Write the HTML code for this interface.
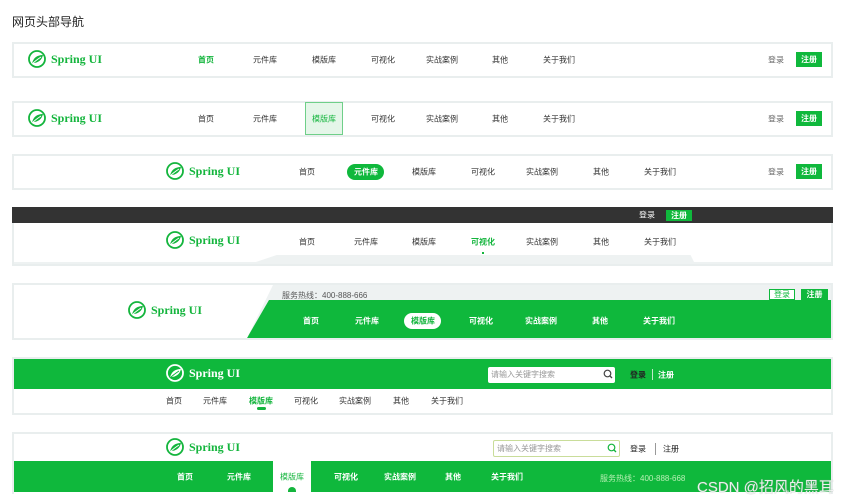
<!DOCTYPE html>
<html><head><meta charset="utf-8"><style>
*{margin:0;padding:0;box-sizing:border-box}
body{width:843px;height:500px;background:#fff;position:relative;overflow:hidden;font-family:"Liberation Sans","Noto Sans CJK SC",sans-serif;font-size:8px;color:#333}
.a{position:absolute}
.box{position:absolute;left:12px;width:821px;border:2px solid #e9eeee;background:#fff}
.t{position:absolute;transform:translate(-50%,-50%);white-space:nowrap;font-size:8px}
.logo{position:absolute;display:flex;align-items:center;transform:translateY(-50%)}
.logo span{font-family:"Liberation Serif","DejaVu Serif",serif;font-weight:bold;font-size:12px;color:#14b53d;margin-left:5px}
.logo.w span{color:#fff}
.g{color:#14b53d}
.btn{position:absolute;background:#0fb83c;color:#fff;font-size:8px;display:flex;align-items:center;justify-content:center;font-weight:bold}
.wt{color:#fff;font-weight:bold}
</style></head><body>
<div class="a" style="left:12px;top:13px;font-size:12px;color:#222">网页头部导航</div>

<!-- Box1 -->
<div class="box" style="top:42px;height:36px"></div>
<div class="logo" style="left:28px;top:59px"><svg width="18" height="18" viewBox="0 0 18 18"><circle cx="9" cy="9" r="8" fill="none" stroke="#14b53d" stroke-width="1.8"/><path d="M4 14 C5 8 9 5 15 5 C14 10 10 13 5 13Z" fill="#14b53d"/><path d="M4 14 C7 11 10 9 13 7" stroke="#fff" stroke-width="1" fill="none"/></svg><span>Spring UI</span></div>
<div class="t g" style="left:206px;top:60px;font-weight:bold">首页</div>
<div class="t" style="left:265px;top:60px">元件库</div>
<div class="t" style="left:324px;top:60px">模版库</div>
<div class="t" style="left:383px;top:60px">可视化</div>
<div class="t" style="left:442px;top:60px">实战案例</div>
<div class="t" style="left:500px;top:60px">其他</div>
<div class="t" style="left:559px;top:60px">关于我们</div>
<div class="t" style="left:776px;top:60px;color:#666">登录</div>
<div class="btn" style="left:796px;top:52px;width:26px;height:15px">注册</div>

<!-- Box2 -->
<div class="box" style="top:101px;height:36px"></div>
<div class="logo" style="left:28px;top:118px"><svg width="18" height="18" viewBox="0 0 18 18"><circle cx="9" cy="9" r="8" fill="none" stroke="#14b53d" stroke-width="1.8"/><path d="M4 14 C5 8 9 5 15 5 C14 10 10 13 5 13Z" fill="#14b53d"/><path d="M4 14 C7 11 10 9 13 7" stroke="#fff" stroke-width="1" fill="none"/></svg><span>Spring UI</span></div>
<div class="a" style="left:305px;top:102px;width:38px;height:33px;background:#e5f6e9;border:1px solid #6fcf89"></div>
<div class="t" style="left:206px;top:119px">首页</div>
<div class="t" style="left:265px;top:119px">元件库</div>
<div class="t g" style="left:324px;top:119px">模版库</div>
<div class="t" style="left:383px;top:119px">可视化</div>
<div class="t" style="left:442px;top:119px">实战案例</div>
<div class="t" style="left:500px;top:119px">其他</div>
<div class="t" style="left:559px;top:119px">关于我们</div>
<div class="t" style="left:776px;top:119px;color:#666">登录</div>
<div class="btn" style="left:796px;top:111px;width:26px;height:15px">注册</div>

<!-- Box3 -->
<div class="box" style="top:154px;height:36px"></div>
<div class="logo" style="left:166px;top:171px"><svg width="18" height="18" viewBox="0 0 18 18"><circle cx="9" cy="9" r="8" fill="none" stroke="#14b53d" stroke-width="1.8"/><path d="M4 14 C5 8 9 5 15 5 C14 10 10 13 5 13Z" fill="#14b53d"/><path d="M4 14 C7 11 10 9 13 7" stroke="#fff" stroke-width="1" fill="none"/></svg><span>Spring UI</span></div>
<div class="a" style="left:347px;top:164px;width:37px;height:16px;border-radius:8px;background:#0fb83c"></div>
<div class="t" style="left:307px;top:172px">首页</div>
<div class="t wt" style="left:366px;top:172px">元件库</div>
<div class="t" style="left:424px;top:172px">模版库</div>
<div class="t" style="left:483px;top:172px">可视化</div>
<div class="t" style="left:542px;top:172px">实战案例</div>
<div class="t" style="left:601px;top:172px">其他</div>
<div class="t" style="left:660px;top:172px">关于我们</div>
<div class="t" style="left:776px;top:172px;color:#666">登录</div>
<div class="btn" style="left:796px;top:164px;width:26px;height:15px">注册</div>

<!-- Box4 -->
<div class="a" style="left:12px;top:207px;width:821px;height:16px;background:#333"></div>
<div class="t" style="left:647px;top:215px;color:#fff">登录</div>
<div class="btn" style="left:666px;top:210px;width:26px;height:11px">注册</div>
<div class="box" style="top:223px;height:43px;border-top:none"></div>
<div class="a" style="left:14px;top:262px;width:817px;height:2px;background:#eef2f2"></div>
<div class="a" style="left:250px;top:255px;width:445px;height:9px;background:#eef2f2;clip-path:polygon(6% 0,99% 0,100% 100%,0 100%)"></div>
<div class="logo" style="left:166px;top:240px"><svg width="18" height="18" viewBox="0 0 18 18"><circle cx="9" cy="9" r="8" fill="none" stroke="#14b53d" stroke-width="1.8"/><path d="M4 14 C5 8 9 5 15 5 C14 10 10 13 5 13Z" fill="#14b53d"/><path d="M4 14 C7 11 10 9 13 7" stroke="#fff" stroke-width="1" fill="none"/></svg><span>Spring UI</span></div>
<div class="t" style="left:307px;top:242px">首页</div>
<div class="t" style="left:366px;top:242px">元件库</div>
<div class="t" style="left:424px;top:242px">模版库</div>
<div class="t g" style="left:483px;top:242px;font-weight:bold">可视化</div>
<div class="a" style="left:482px;top:252px;width:2px;height:2px;background:#14b53d"></div>
<div class="t" style="left:542px;top:242px">实战案例</div>
<div class="t" style="left:601px;top:242px">其他</div>
<div class="t" style="left:660px;top:242px">关于我们</div>

<!-- Box5 -->
<div class="box" style="top:283px;height:57px"></div>
<div class="a" style="left:14px;top:285px;width:817px;height:53px;background:#eef2f2;clip-path:polygon(255px 0,817px 0,817px 53px,232px 53px)"></div>
<div class="a" style="left:14px;top:300px;width:817px;height:38px;background:#0fb83c;clip-path:polygon(255px 0,817px 0,817px 38px,233px 38px)"></div>
<div class="a" style="left:14px;top:285px;width:259px;height:53px;background:#fff;clip-path:polygon(0 0,259px 0,233px 53px,0 53px)"></div>
<div class="logo" style="left:128px;top:310px"><svg width="18" height="18" viewBox="0 0 18 18"><circle cx="9" cy="9" r="8" fill="none" stroke="#14b53d" stroke-width="1.8"/><path d="M4 14 C5 8 9 5 15 5 C14 10 10 13 5 13Z" fill="#14b53d"/><path d="M4 14 C7 11 10 9 13 7" stroke="#fff" stroke-width="1" fill="none"/></svg><span>Spring UI</span></div>
<div class="a" style="left:282px;top:290px;color:#555;font-size:8px">服务热线：400-888-666</div>
<div class="a" style="left:769px;top:289px;width:26px;height:11px;border:1px solid #0fb83c;color:#0fb83c;font-size:8px;text-align:center;line-height:9px;background:#fff">登录</div>
<div class="btn" style="left:801px;top:289px;width:27px;height:11px">注册</div>
<div class="a" style="left:404px;top:313px;width:37px;height:16px;border-radius:8px;background:#fff"></div>
<div class="t wt" style="left:311px;top:321px">首页</div>
<div class="t wt" style="left:367px;top:321px">元件库</div>
<div class="t g" style="left:423px;top:321px;font-weight:bold">模版库</div>
<div class="t wt" style="left:481px;top:321px">可视化</div>
<div class="t wt" style="left:541px;top:321px">实战案例</div>
<div class="t wt" style="left:600px;top:321px">其他</div>
<div class="t wt" style="left:659px;top:321px">关于我们</div>

<!-- Box6 -->
<div class="box" style="top:357px;height:58px"></div>
<div class="a" style="left:14px;top:359px;width:817px;height:30px;background:#0fb83c"></div>
<div class="logo w" style="left:166px;top:373px"><svg width="18" height="18" viewBox="0 0 18 18"><circle cx="9" cy="9" r="8" fill="none" stroke="#fff" stroke-width="1.8"/><path d="M4 14 C5 8 9 5 15 5 C14 10 10 13 5 13Z" fill="#fff"/><path d="M4 14 C7 11 10 9 13 7" stroke="#0fb83c" stroke-width="1" fill="none"/></svg><span>Spring UI</span></div>
<div class="a" style="left:488px;top:367px;width:127px;height:16px;background:#fff;border-radius:2px;color:#999;font-size:8px;line-height:16px;padding-left:3px">请输入关键字搜索</div>
<svg class="a" style="left:603px;top:369px" width="10" height="10" viewBox="0 0 10 10"><circle cx="4.5" cy="4.5" r="3.3" fill="none" stroke="#444" stroke-width="1.2"/><path d="M7 7 L9 9" stroke="#444" stroke-width="1.3"/></svg>
<div class="t" style="left:638px;top:375px;color:#222;font-weight:bold">登录</div>
<div class="a" style="left:652px;top:369px;width:1px;height:11px;background:#bfe9c9"></div>
<div class="t wt" style="left:666px;top:375px">注册</div>
<div class="t" style="left:174px;top:401px">首页</div>
<div class="t" style="left:215px;top:401px">元件库</div>
<div class="t g" style="left:261px;top:401px;font-weight:bold">模版库</div>
<div class="a" style="left:257px;top:407px;width:9px;height:3px;border-radius:2px;background:#14b53d"></div>
<div class="t" style="left:306px;top:401px">可视化</div>
<div class="t" style="left:355px;top:401px">实战案例</div>
<div class="t" style="left:401px;top:401px">其他</div>
<div class="t" style="left:447px;top:401px">关于我们</div>

<!-- Box7 -->
<div class="box" style="top:432px;height:62px;border-bottom:none"></div>
<div class="a" style="left:14px;top:461px;width:817px;height:31px;background:#0fb83c"></div>
<div class="logo" style="left:166px;top:447px"><svg width="18" height="18" viewBox="0 0 18 18"><circle cx="9" cy="9" r="8" fill="none" stroke="#14b53d" stroke-width="1.8"/><path d="M4 14 C5 8 9 5 15 5 C14 10 10 13 5 13Z" fill="#14b53d"/><path d="M4 14 C7 11 10 9 13 7" stroke="#fff" stroke-width="1" fill="none"/></svg><span>Spring UI</span></div>
<div class="a" style="left:493px;top:440px;width:127px;height:17px;background:#fff;border:1px solid #c9dd9a;border-radius:2px;color:#999;font-size:8px;line-height:15px;padding-left:3px">请输入关键字搜索</div>
<svg class="a" style="left:607px;top:443px" width="10" height="10" viewBox="0 0 10 10"><circle cx="4.5" cy="4.5" r="3.3" fill="none" stroke="#14b53d" stroke-width="1.2"/><path d="M7 7 L9 9" stroke="#14b53d" stroke-width="1.3"/></svg>
<div class="t" style="left:638px;top:449px;color:#222">登录</div>
<div class="a" style="left:655px;top:443px;width:1px;height:12px;background:#999"></div>
<div class="t" style="left:671px;top:449px;color:#222">注册</div>
<div class="a" style="left:273px;top:461px;width:38px;height:31px;background:#fff"></div>
<div class="a" style="left:288px;top:487px;width:8px;height:5px;border-radius:4px 4px 0 0;background:#14b53d"></div>
<div class="t wt" style="left:185px;top:477px">首页</div>
<div class="t wt" style="left:239px;top:477px">元件库</div>
<div class="t g" style="left:292px;top:477px">模版库</div>
<div class="t wt" style="left:346px;top:477px">可视化</div>
<div class="t wt" style="left:400px;top:477px">实战案例</div>
<div class="t wt" style="left:453px;top:477px">其他</div>
<div class="t wt" style="left:507px;top:477px">关于我们</div>
<div class="a" style="left:600px;top:473px;color:#b9f0b4;font-size:8px">服务热线：400-888-668</div>
<div class="a" style="left:697px;top:476px;color:rgba(255,255,255,0.85);font-size:15px;text-shadow:0 0 1px #999">CSDN @招风的黑耳</div>
</body></html>
